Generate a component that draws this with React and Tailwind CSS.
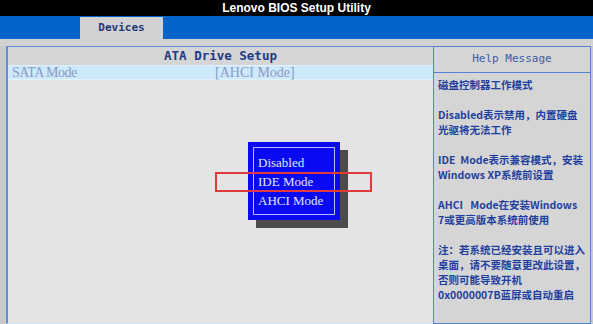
import React from "react";

const helpText = [
  ["磁盘控制器工作模式"],
  ["Disabled表示禁用，内置硬盘", "光驱将无法工作"],
  ["IDE\u00a0\u00a0Mode表示兼容模式，安装", "Windows XP系统前设置"],
  ["AHCI\u00a0\u00a0\u00a0Mode在安装Windows", "7或更高版本系统前使用"],
  [
    "注：若系统已经安装且可以进入",
    "桌面，请不要随意更改此设置，",
    "否则可能导致开机",
    "0x0000007B蓝屏或自动重启",
  ],
];

const options = ["Disabled", "IDE Mode", "AHCI Mode"];

const App = () => {
  return (
    <div className="w-[593px] h-[324px] overflow-hidden bg-[#c9c9c9] flex flex-col">
      {/* title bar */}
      <div className="h-[16px] bg-black flex items-center justify-center">
        <span className="text-white font-bold text-[12px] leading-none font-['Liberation_Sans',sans-serif]">
          Lenovo BIOS Setup Utility
        </span>
      </div>

      {/* menu bar */}
      <div className="h-[23px] bg-[#0064c8] flex items-end">
        <div className="ml-[80px] w-[83px] h-[22px] bg-[#d2d2d2] flex items-center justify-center">
          <span className="text-[11px] font-bold text-[#1c3a78] font-['DejaVu_Sans_Mono',monospace]">
            Devices
          </span>
        </div>
      </div>
      <div className="h-[7px] bg-[#d2d2d2]" />

      {/* main */}
      <div className="flex-1 flex pl-[6px] pr-[2px] min-h-0">
        {/* left panel */}
        <div className="relative w-[427px] flex flex-col border-l-2 border-t border-[#5d8fdc] border-b border-b-[#d3e6f6] bg-[#e4e4e4]">
          <div className="h-[18px] bg-[#d5d5d5] flex items-center justify-center">
            <span className="text-[12.5px] font-bold text-[#1d3b86] font-['DejaVu_Sans_Mono',monospace]">
              ATA Drive Setup
            </span>
          </div>
          <div className="h-[15px] bg-[#cde9fb] border-y border-[#e2f1fc] flex items-center relative">
            <span className="absolute left-[4px] text-[14px] tracking-[-0.5px] text-[#8b9bc6] font-['Liberation_Serif',serif] leading-none">
              SATA Mode
            </span>
            <span className="absolute left-[207px] text-[14px] text-[#8b9bc6] font-['Liberation_Serif',serif] leading-none">
              [AHCI Mode]
            </span>
          </div>
          <div className="flex-1" />

          {/* popup shadow */}
          <div className="absolute left-[248px] top-[103px] w-[92px] h-[78px] bg-[#4b4b4b]" />
          {/* popup */}
          <div className="absolute left-[240px] top-[95px] w-[92px] h-[78px] bg-[#0a0af2] p-[5px]">
            <div className="w-full h-full border border-[#b9b9ff] pt-[5px] pl-[4px]">
              {options.map((opt) => (
                <div
                  key={opt}
                  className="h-[19px] leading-[19px] text-[13px] text-[#e4e4ff] font-['Liberation_Serif',serif] whitespace-pre"
                >
                  {opt}
                </div>
              ))}
            </div>
          </div>
          {/* highlight frame */}
          <div className="absolute left-[207px] top-[125px] w-[157px] h-[20px] border-2 border-[#e23a3a]" />
        </div>

        {/* right panel */}
        <div className="w-[158px] flex flex-col border border-[#5283d4] bg-[#d5d5d5]">
          <div className="h-[26px] border-b border-[#5283d4] flex items-center justify-center">
            <span className="text-[11px] text-[#3a5ea8] font-['DejaVu_Sans_Mono',monospace]">
              Help Message
            </span>
          </div>
          <div className="pt-[4px] pl-[4px] text-[10.5px] font-bold text-[#1f3fa0] font-['Noto_Sans_CJK_SC',sans-serif]">
            {helpText.map((para, i) => (
              <div key={i} className={i > 0 ? "mt-[15px]" : ""}>
                {para.map((line) => (
                  <div key={line} className="h-[15px] leading-[15px] whitespace-pre">
                    {line}
                  </div>
                ))}
              </div>
            ))}
          </div>
        </div>
      </div>
    </div>
  );
};

export default App;
